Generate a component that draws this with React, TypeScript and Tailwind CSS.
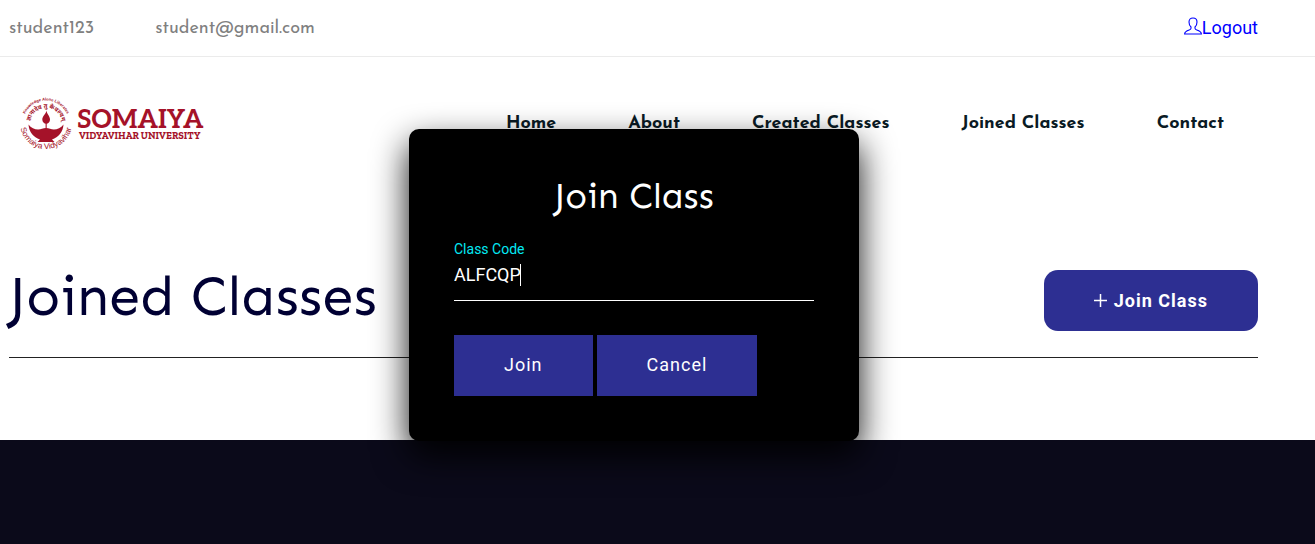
import { useState } from "react";

const navLinks = ["Home", "About", "Created Classes", "Joined Classes", "Contact"];

function UserIcon() {
  return (
    <svg className="mb-1 size-[18px]" viewBox="0 0 18 18" fill="none" stroke="currentColor" strokeWidth="1.1" aria-hidden="true">
      <path d="M7 10C5.800 9 5 7.200 5 5C5 2.400 6.400 1 9 1S13 2.400 13 5C13 7.200 12.200 9 11 10V11.300C11 12.300 11.600 12.600 12.800 13C16 14 17.300 14.600 17.400 17H.600C.700 14.600 2 14 5.200 13C6.400 12.600 7 12.300 7 11.300Z" />
    </svg>
  );
}

function Logo() {
  return (
    <svg className="h-14 w-48 overflow-visible" viewBox="0 0 192 56" fill="#a51229" role="img" aria-label="Somaiya Vidyavihar University">
      <defs>
        <path id="arc-top" d="M3 28.500A23 23 0 0 1 49 28.500" />
        <path id="arc-inner" d="M10 29A16 16 0 0 1 42 29" />
        <path id="arc-bottom" d="M0 28A26 26 0 0 0 52 28" />
      </defs>
      <text className="font-['Liberation_Sans'] text-[4px] font-bold">
        <textPath href="#arc-top" startOffset="50%" textAnchor="middle">Knowledge Alone Liberates</textPath>
      </text>
      <text className="font-['Noto_Sans','Noto_Sans_Devanagari',sans-serif] text-[6px] font-bold">
        <textPath href="#arc-inner" startOffset="50%" textAnchor="middle">ज्ञानादेव तु कैवल्यम्</textPath>
      </text>
      <text className="font-['Liberation_Sans'] text-[8px]">
        <textPath href="#arc-bottom" startOffset="50%" textAnchor="middle">Somaiya Vidyavihar</textPath>
      </text>
      <path d="M26.500 15.500C26.800 19 30 21 30 24.600C30 27.200 28.300 28.800 26.200 28.800S22.300 27.200 22.300 24.600C22.300 21 26 19 26.500 15.500Z" />
      <path d="M25.600 28H26.700V34H25.600Z" />
      <path d="M8.500 29.500C12 34.500 18 35.500 22 33.800C24.500 32.700 27.500 32.700 30 33.800C34 35.500 40 34.500 43.500 29.500C43 37 38.500 42.500 32 44.500L34.500 47H17.500L20 44.500C13.500 42.500 9 37 8.500 29.500Z" />
      <text x="57" y="33" className="font-[Aleo,'DejaVu_Serif_Condensed',serif] text-[26px] font-bold">SOMAIYA</text>
      <text x="59" y="44" className="font-['Zilla_Slab','DejaVu_Serif_Condensed',serif] text-[10px] font-bold">VIDYAVIHAR UNIVERSITY</text>
    </svg>
  );
}

function PlusIcon() {
  return (
    <svg className="size-4" viewBox="0 0 16 16" stroke="currentColor" strokeWidth="1.5" aria-hidden="true">
      <path d="M0 7.500H13M6.500 1V14" />
    </svg>
  );
}

function JoinDialog({ onClose }: { onClose: () => void }) {
  const [code, setCode] = useState("ALFCQP");
  return (
    <div
      role="dialog"
      aria-labelledby="join-title"
      className="absolute inset-x-0 top-[129px] mx-auto w-[450px] rounded-[10px] bg-black px-[45px] pt-[42px] pb-[45px] shadow-[0_15px_35px_rgba(0,0,0,0.95)]"
    >
      <h2 id="join-title" className="text-center font-[Sen,'Josefin_Sans',sans-serif] text-[36px] leading-[50px] text-white">
        Join Class
      </h2>
      <form onSubmit={(e) => e.preventDefault()}>
        <label htmlFor="class-code" className="mt-[18px] block text-sm leading-5 text-[#03e9f4]">Class Code</label>
        <div className="relative">
          <input
            id="class-code"
            value={code}
            onChange={(e) => setCode(e.target.value)}
            className="block h-[42px] w-full border-b border-white bg-transparent pb-[10px] text-lg text-white caret-transparent outline-none"
          />
          <span className="absolute top-[5px] left-[66px] h-[22px] w-px bg-white" />
        </div>
        <div className="mt-[34px] flex gap-1">
          <button type="submit" className="h-[61px] bg-[#2d2f92] px-[50px] pb-[2px] text-lg tracking-[1px] text-white">Join</button>
          <button type="button" onClick={onClose} className="h-[61px] bg-[#2d2f92] px-[50px] pb-[2px] text-lg tracking-[1px] text-white">Cancel</button>
        </div>
      </form>
    </div>
  );
}

export default function App() {
  const [open, setOpen] = useState(true);
  return (
    <div className="flex min-h-screen flex-col bg-white font-[Roboto,sans-serif]">
      <div className="border-b border-[#ebebeb]">
        <div className="mr-[47px] flex h-14 items-center justify-between pr-[10px] pl-[9px]">
          <div className="flex gap-[61px] pt-[2px] font-['Josefin_Sans',Lato,sans-serif] text-lg text-[#808080]">
            <span>student123</span>
            <span>student@gmail.com</span>
          </div>
          <a href="#logout" className="flex items-center text-lg text-[#0000ff]">
            <UserIcon />
            Logout
          </a>
        </div>
      </div>
      <div className="relative mr-[47px]">
        <div className="absolute inset-x-0 -top-[57px]">{open && <JoinDialog onClose={() => setOpen(false)} />}</div>
        <header className="flex h-[132px] items-center justify-between pr-11 pl-5">
          <a href="#home"><Logo /></a>
          <nav className="flex gap-[72px] pt-[2px] font-['Josefin_Sans',Lato,sans-serif] text-lg font-bold text-[#0a1a24]">
            {navLinks.map((label) => (
              <a key={label} href="#section">{label}</a>
            ))}
          </nav>
        </header>
        <main className="pr-[10px] pb-[82px] pl-[9px]">
          <div className="flex items-center justify-between border-b border-[#222222] pt-[77px] pb-[23px]">
            <h1 className="pb-2 font-[Sen,'Josefin_Sans',sans-serif] text-[56px] leading-[60px] text-[#000033]">Joined Classes</h1>
            <button
              type="button"
              onClick={() => setOpen(true)}
              className="flex h-[61px] items-center gap-1 rounded-[14px] bg-[#2d2f92] px-[50px] pt-[2px] text-lg font-bold tracking-[1px] text-white"
            >
              <PlusIcon />
              Join Class
            </button>
          </div>
        </main>
      </div>
      <footer className="grow bg-[#0b0a1a]" />
    </div>
  );
}
